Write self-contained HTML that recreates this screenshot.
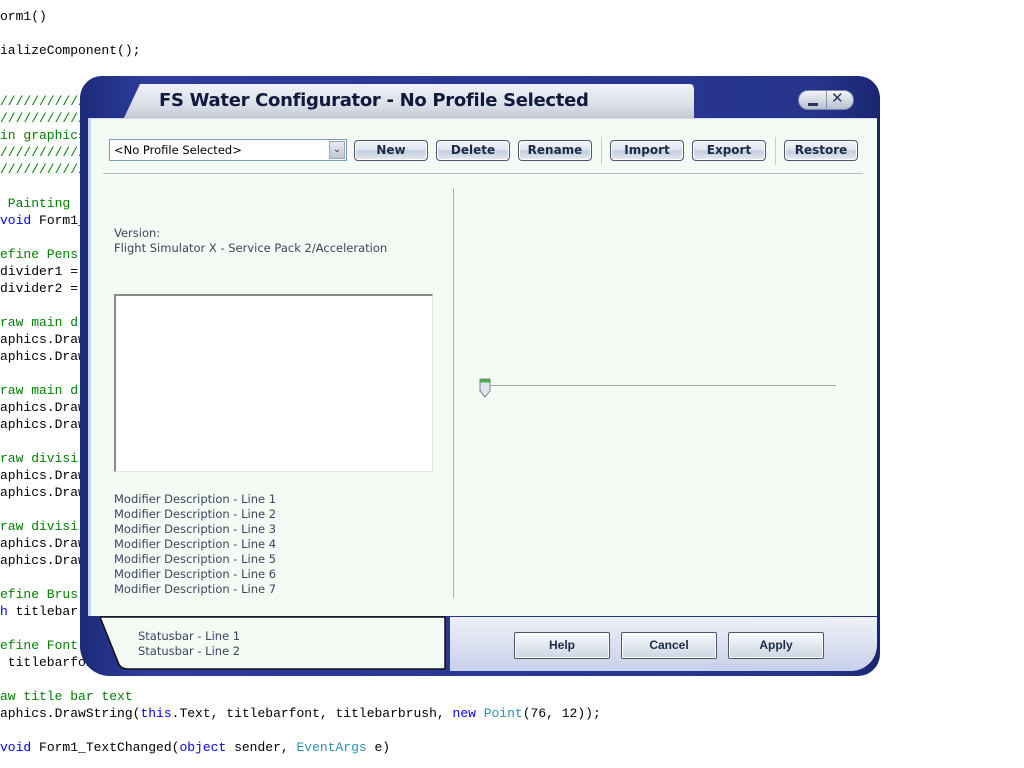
<!DOCTYPE html>
<html><head><meta charset="utf-8"><style>
*{margin:0;padding:0;box-sizing:border-box}
body{width:1024px;height:768px;background:#fff;position:relative;overflow:hidden;font-family:"DejaVu Sans","Liberation Sans",sans-serif}
#code{position:absolute;left:0;top:8px;font:13px/17px "Liberation Mono",monospace;color:#000;white-space:pre}
.g{color:#008000}.b{color:#0000ff}.t{color:#2b91af}
.abs{position:absolute}
.btn{position:absolute;top:140px;height:21px;border:1px solid #4a5670;border-radius:4px;background:linear-gradient(#f4f6fa,#dfe5ee 45%,#c3cddd 55%,#e8edf4);font:bold 12px "DejaVu Sans",sans-serif;color:#1c2a48;text-align:center;line-height:19px;box-shadow:inset 0 0 0 1px #fff}
.bb{position:absolute;top:632px;height:27px;border:1px solid #4a5670;border-radius:2px;background:linear-gradient(#fafbfd,#e2e7ef 50%,#cfd7e3);font:bold 12px "Liberation Sans",sans-serif;color:#1c2a48;text-align:center;line-height:25px;box-shadow:inset 0 0 0 1px #fff}
.txt{font-size:11.5px;color:#3a465c;line-height:15px}
</style></head><body>
<div id="code"><span>orm1()</span>

<span>ializeComponent();</span>


<span class="g">////////////</span>
<span class="g">////////////</span>
<span class="g">in graphics</span>
<span class="g">////////////</span>
<span class="g">////////////</span>

<span class="g"> Painting</span>
<span class="b">void</span> Form1_

<span class="g">efine Pens</span>
divider1 =
divider2 =

<span class="g">raw main d</span>
aphics.Draw
aphics.Draw

<span class="g">raw main d</span>
aphics.Draw
aphics.Draw

<span class="g">raw divisi</span>
aphics.Draw
aphics.Draw

<span class="g">raw divisi</span>
aphics.Draw
aphics.Draw

<span class="g">efine Brus</span>
<span class="b">h</span> titlebar

<span class="g">efine Font</span>
 titlebarfont

<span class="g">aw title bar text</span>
aphics.DrawString(<span class="b">this</span>.Text, titlebarfont, titlebarbrush, <span class="b">new</span> <span class="t">Point</span>(76, 12));

<span class="b">void</span> Form1_TextChanged(<span class="b">object</span> sender, <span class="t">EventArgs</span> e)</div>

<div class="abs" style="left:80px;top:76px;width:800px;height:600px;background:linear-gradient(90deg,#1d2a78,#2c3c9a 8%,#26348c 92%,#1a2670);border-radius:22px 22px 22px 30px"></div>
<svg class="abs" style="left:100px;top:82px" width="600" height="40"><defs><linearGradient id="tg" x1="0" y1="0" x2="0" y2="1"><stop offset="0" stop-color="#f0f2f6"/><stop offset="0.6" stop-color="#d9dde6"/><stop offset="1" stop-color="#b9bfcd"/></linearGradient></defs><path d="M40 2 L590 2 Q594 2 594 8 L594 40 L22 40 Z" fill="url(#tg)"/></svg>
<div class="abs" style="left:159px;top:90px;font:bold 18px 'DejaVu Sans',sans-serif;color:#0f1a3c;letter-spacing:-0.3px">FS Water Configurator - No Profile Selected</div>
<div class="abs" style="left:798px;top:90px;width:56px;height:20px;border-radius:10px;background:linear-gradient(#f2f4f8,#b8c0d0);border:1px solid #7a86a8"></div>
<div class="abs" style="left:826px;top:91px;width:1px;height:18px;background:#8a94b0"></div>
<div class="abs" style="left:808px;top:103px;width:10px;height:3px;background:#2a3660"></div>
<div class="abs" style="left:831px;top:89px;font:bold 15px 'DejaVu Sans',sans-serif;color:#2a3660">✕</div>
<div class="abs" style="left:88px;top:118px;width:789px;height:498px;background:#f4fbf5;border-left:3px solid #c6d3e8;border-top:1px solid #d4dbe8"></div>
<div class="abs" style="left:109px;top:139px;width:238px;height:22px;border:1px solid #7f9db9;background:#fff;font-size:11.5px;line-height:20px;padding-left:4px;color:#000">&lt;No Profile Selected&gt;</div>
<div class="abs" style="left:329px;top:141px;width:16px;height:18px;background:linear-gradient(#e8ebf2,#bfc6d4);border:1px solid #9aa6bc;font-size:10px;text-align:center;line-height:16px;color:#333">⌄</div>
<div class="btn" style="left:354px;width:74px">New</div>
<div class="btn" style="left:436px;width:74px">Delete</div>
<div class="btn" style="left:518px;width:74px">Rename</div>
<div class="abs" style="left:601px;top:137px;width:1px;height:28px;background:#c8ccd6"></div>
<div class="btn" style="left:610px;width:74px">Import</div>
<div class="btn" style="left:692px;width:74px">Export</div>
<div class="abs" style="left:775px;top:137px;width:1px;height:28px;background:#c8ccd6"></div>
<div class="btn" style="left:784px;width:74px">Restore</div>
<div class="abs" style="left:103px;top:173px;width:760px;height:1px;background:#b4bccc"></div>
<div class="abs" style="left:453px;top:188px;width:1px;height:410px;background:#a8b0c0"></div>
<div class="abs txt" style="left:114px;top:226px">Version:<br>Flight Simulator X - Service Pack 2/Acceleration</div>
<div class="abs" style="left:114px;top:294px;width:319px;height:178px;background:#fff;border-top:2px solid #8a8a8a;border-left:2px solid #8a8a8a;border-right:1px solid #e4e4e4;border-bottom:1px solid #e4e4e4"></div>
<div class="abs txt" style="left:114px;top:492px">Modifier Description - Line 1<br>Modifier Description - Line 2<br>Modifier Description - Line 3<br>Modifier Description - Line 4<br>Modifier Description - Line 5<br>Modifier Description - Line 6<br>Modifier Description - Line 7</div>
<div class="abs" style="left:484px;top:385px;width:352px;height:2px;background:#a8a8a0;border-bottom:1px solid #fff"></div>
<svg class="abs" style="left:479px;top:378px" width="12" height="20"><path d="M1 1 H11 V13 L6 19 L1 13 Z" fill="#e2e4ea" stroke="#7a8090"/><rect x="1.5" y="1.5" width="9" height="3" fill="#3cb83c"/></svg>
<div class="abs" style="left:450px;top:617px;width:427px;height:54px;background:linear-gradient(#eef1f8,#c8d0e8);border-radius:0 0 26px 0"></div>
<svg class="abs" style="left:100px;top:616px" width="346" height="54"><path d="M0 1 H345 V53 H28 Q20 53 18 46 Z" fill="#f4fbf5" stroke="#111" stroke-width="1.5"/></svg>
<div class="abs txt" style="left:138px;top:629px;font-family:'DejaVu Sans',sans-serif;font-size:11.5px">Statusbar - Line 1<br>Statusbar - Line 2</div>
<div class="bb" style="left:514px;width:96px">Help</div>
<div class="bb" style="left:621px;width:96px">Cancel</div>
<div class="bb" style="left:728px;width:96px">Apply</div>
</body></html>
